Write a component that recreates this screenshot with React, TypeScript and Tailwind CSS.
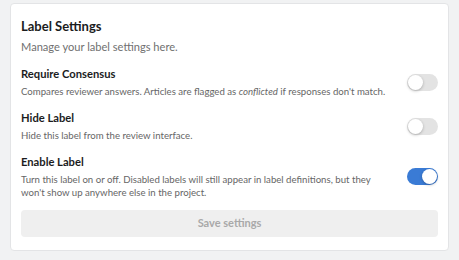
import { useState } from "react"

type Setting = {
  title: string
  desc: React.ReactNode
  on: boolean
}

function Toggle({ on, onChange }: { on: boolean; onChange: () => void }) {
  return (
    <button
      onClick={onChange}
      className={`relative flex-shrink-0 w-[31px] h-[17px] rounded-full transition-colors ${
        on ? "bg-[#3a7bd5]" : "bg-[#e3e3e3]"
      }`}
    >
      <span
        className={`absolute top-[1px] w-[15px] h-[15px] rounded-full bg-white shadow-[0_1px_3px_rgba(0,0,0,0.25)] transition-all ${
          on ? "left-[15px]" : "left-[1px]"
        }`}
      />
    </button>
  )
}

export default function App() {
  const [settings, setSettings] = useState<Setting[]>([
    {
      title: "Require Consensus",
      desc: (
        <>
          Compares reviewer answers. Articles are flagged as <em>conflicted</em> if responses don't match.
        </>
      ),
      on: false,
    },
    {
      title: "Hide Label",
      desc: "Hide this label from the review interface.",
      on: false,
    },
    {
      title: "Enable Label",
      desc: "Turn this label on or off. Disabled labels will still appear in label definitions, but they won't show up anywhere else in the project.",
      on: true,
    },
  ])

  const toggle = (i: number) =>
    setSettings((s) => s.map((x, j) => (j === i ? { ...x, on: !x.on } : x)))

  return (
    <div className="w-[459px] h-[260px] bg-[#f1f2f3] pt-[3px] px-[10px] font-['Lato',sans-serif]">
      <div className="bg-white border border-[#e3e4e6] rounded-[4px] px-[10px] pt-[12px] pb-[13px]">
        {/* Header */}
        <h2 className="text-[13px] leading-[20px] font-bold text-[#1b1c1d]">Label Settings</h2>
        <p className="mt-[3px] text-[11.1px] leading-[16px] text-[#707070]">Manage your label settings here.</p>

        {/* Rows */}
        <div className="mt-[11px] flex flex-col gap-[12px]">
          {settings.map((s, i) => (
            <div key={i} className="flex items-center justify-between gap-4">
              <div className="max-w-[375px]">
                <h3 className="text-[11.2px] leading-[16px] font-bold text-[#1b1c1d]">{s.title}</h3>
                <p className="mt-[3px] text-[9.65px] leading-[13px] text-[#666]">{s.desc}</p>
              </div>
              <Toggle on={s.on} onChange={() => toggle(i)} />
            </div>
          ))}
        </div>

        {/* Save */}
        <button
          disabled
          className="mt-[11px] w-full h-[27px] rounded-[4px] bg-[#efefef] text-[11px] font-bold text-[#a9a9a9]"
        >
          Save settings
        </button>
      </div>
    </div>
  )
}
